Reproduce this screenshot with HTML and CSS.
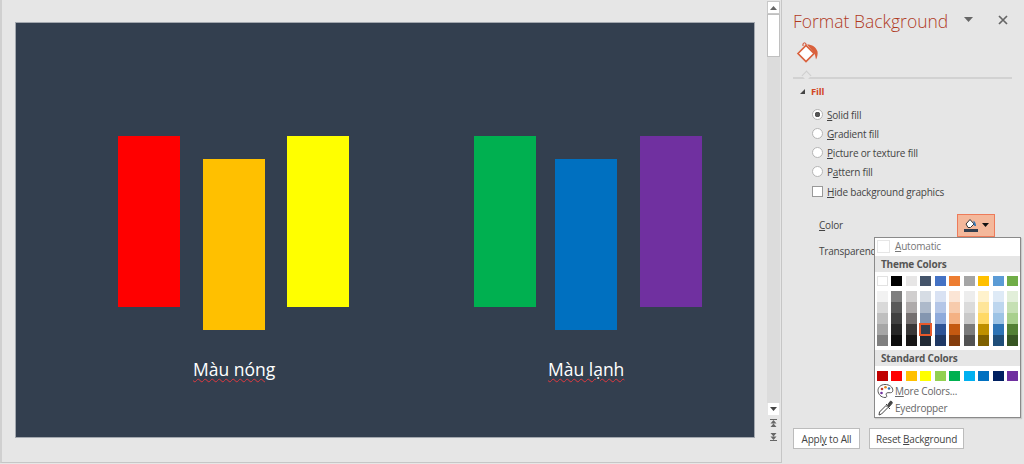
FILE: index.html
```html
<!DOCTYPE html>
<html lang="vi">
<head>
<meta charset="utf-8">
<title>Format Background</title>
<link rel="stylesheet" href="styles.css">
</head>
<body>
<div class="app">
  <main class="editor">
    <div class="canvas">
      <section class="slide">
        <div class="bar red"></div>
        <div class="bar orange"></div>
        <div class="bar yellow"></div>
        <div class="bar green"></div>
        <div class="bar blue"></div>
        <div class="bar purple"></div>
        <p class="caption hot">Màu nóng</p>
        <p class="caption cold">Màu lạnh</p>
      </section>
    </div>
    <div class="scrollbar">
      <div class="sb-btn top"><svg width="7" height="4" viewBox="0 0 7 4"><path d="M3.500 0 7 4H0z" fill="#666"/></svg></div>
      <div class="sb-thumb"></div>
      <div class="sb-track"></div>
      <div class="sb-btn down"><svg width="7" height="4" viewBox="0 0 7 4"><path d="M0 0H7L3.500 4z" fill="#444"/></svg></div>
      <div class="sb-page"><svg width="7" height="8" viewBox="0 0 7 8"><path d="M0 0h7v1H0zM3.500 1 6.500 4.500H.5zM3.500 4.500 6.500 8H.5z" fill="#666"/></svg></div>
      <div class="sb-page"><svg width="7" height="8" viewBox="0 0 7 8"><path d="M.5 0H6.500L3.500 3.500zM.5 3.500H6.500L3.500 7zM0 7h7v1H0z" fill="#666"/></svg></div>
    </div>
  </main>

  <aside class="pane">
    <header class="pane-head">
      <h1 class="pane-title">Format Background</h1>
      <svg class="pane-menu" width="9" height="5" viewBox="0 0 9 5"><path d="M0 0H9L4.500 5z" fill="#666"/></svg>
      <svg class="pane-close" width="10" height="10" viewBox="0 0 10 10"><path d="M1 1 9 9M9 1 1 9" stroke="#666" stroke-width="1.700"/></svg>
    </header>
    <div class="tabs">
      <svg width="23" height="22" viewBox="0 0 23 22"><path d="M7 4V2C7 .5 10 .5 10 2V6" fill="none" stroke="#d24726" stroke-width="1"/><path d="M2 11.500 10 3.500l8 8-8 8z" fill="#fff" stroke="#d9603c" stroke-width="1.700"/><path d="M11 2.500c5 0 9 2.500 10.500 7 .5 2-.2 6-1.500 8-.5-2-.5-3.500-1.500-6z" fill="#d9603c"/></svg>
    </div>
    <div class="tab-rule"><span class="notch"></span></div>
    <div class="section-head"><span class="tri"></span><strong>Fill</strong></div>
    <ul class="options">
      <li><span class="radio on"></span><span><u>S</u>olid fill</span></li>
      <li><span class="radio"></span><span><u>G</u>radient fill</span></li>
      <li><span class="radio"></span><span><u>P</u>icture or texture fill</span></li>
      <li><span class="radio"></span><span>P<u>a</u>ttern fill</span></li>
      <li class="check-row"><span class="check"></span><span><u>H</u>ide background graphics</span></li>
    </ul>
    <div class="color-row">
      <span><u>C</u>olor</span>
      <button class="color-btn" type="button">
        <svg width="14" height="14" viewBox="0 0 14 14"><path d="M2 6 6 1.500 10 6 6.500 9.500H4z" fill="#fff" stroke="#333" stroke-width="1"/><path d="M9.500 2.500c1.500 1 2.500 3 2.500 5.500h-1.500L9.500 6z" fill="#2e75b6"/><path d="M0 11h14v3H0z" fill="#333f4f"/></svg>
        <svg width="7" height="4" viewBox="0 0 7 4"><path d="M0 0H7L3.500 4z" fill="#111"/></svg>
      </button>
    </div>
    <div class="trans-row">Transparency</div>
    <footer class="pane-foot">
      <button class="btn apply" type="button">Appl<u>y</u> to All</button>
      <button class="btn reset" type="button">Reset <u>B</u>ackground</button>
    </footer>
  </aside>

  <div class="menu">
    <div class="menu-auto"><span class="auto-chip"></span><span><u>A</u>utomatic</span></div>
    <div class="menu-head">Theme Colors</div>
    <div class="row base" id="base"></div>
    <div class="tints" id="tints"></div>
    <div class="menu-head">Standard Colors</div>
    <div class="row standard" id="standard"></div>
    <div class="menu-item more">
      <svg width="17" height="16" viewBox="0 0 17 16"><path d="M8 1.500C3.500 1.500 1 4.500 1 7.500 1 11 4 14.500 8 14.500c2 0 2-1.500 1.300-2.500-.7-1.200.2-2.300 1.700-2.300h2.500c1.500 0 2.300-1 2.300-2.400C15.800 4 12.500 1.500 8 1.500z" fill="#fff" stroke="#555" stroke-width="1"/><circle cx="5" cy="6" r="1.300" fill="#c0392b"/><circle cx="8.500" cy="4.300" r="1.300" fill="#e08a1e"/><circle cx="12" cy="5.500" r="1.300" fill="#2e75b6"/><circle cx="4.500" cy="10" r="1.300" fill="#7030a0"/></svg>
      <span><u>M</u>ore Colors...</span>
    </div>
    <div class="menu-item">
      <svg width="17" height="16" viewBox="0 0 17 16"><path d="M2 15 2.500 12 9 5.500 11 7.500 4.500 14z" fill="#fff" stroke="#444" stroke-width="1"/><path d="M9 4 10.500 5.500 13 1.500C14 .500 16 2 15 3.500L11.500 7.500 13 9" fill="#444" stroke="#444" stroke-width="1"/></svg>
      <span>Eyedropper</span>
    </div>
  </div>
</div>
<script src="app.js"></script>
</body>
</html>
```
FILE: app.js
```js
var base = ["#ffffff","#000000","#e7e6e6","#44546a","#4472c4","#ed7d31","#a5a5a5","#ffc000","#5b9bd5","#70ad47"];
var tints = [
  ["#f2f2f2","#d9d9d9","#bfbfbf","#a6a6a6","#808080"],
  ["#7f7f7f","#595959","#404040","#262626","#0d0d0d"],
  ["#d0cece","#aeaaaa","#757070","#3a3838","#171616"],
  ["#d6dce4","#adb9ca","#8496b0","#333f4f","#222a35"],
  ["#d9e2f3","#b4c6e7","#8eaadb","#2f5496","#1f3864"],
  ["#fbe5d5","#f7cbac","#f4b183","#c45911","#843c0c"],
  ["#ededed","#dbdbdb","#c9c9c9","#7b7b7b","#525252"],
  ["#fff2cc","#fee599","#ffd965","#bf9000","#7f6000"],
  ["#deeaf6","#bdd6ee","#9cc3e5","#2e74b5","#1f4e79"],
  ["#e2efd9","#c5e0b3","#a8d08d","#538135","#375623"]
];
var standard = ["#c00000","#ff0000","#ffc000","#ffff00","#92d050","#00b050","#00b0f0","#0070c0","#002060","#7030a0"];

function swatch(color, cls) {
  var el = document.createElement("span");
  el.className = cls;
  el.style.background = color;
  return el;
}
function fillRow(id, colors) {
  var row = document.getElementById(id);
  colors.forEach(function (c) { row.appendChild(swatch(c, "swatch")); });
}
fillRow("base", base);
fillRow("standard", standard);
var host = document.getElementById("tints");
tints.forEach(function (col, i) {
  var wrap = document.createElement("div");
  wrap.className = "tint-col";
  col.forEach(function (c, j) {
    wrap.appendChild(swatch(c, i === 3 && j === 3 ? "cell picked" : "cell"));
  });
  host.appendChild(wrap);
});
```
FILE: styles.css
```css
* { box-sizing: border-box; }
html, body { margin: 0; padding: 0; }
body {
  width: 1024px;
  height: 464px;
  overflow: hidden;
  background: #e6e6e6;
  font-family: "Open Sans", "Noto Sans", sans-serif;
  font-size: 10px;
  letter-spacing: -0.2px;
  color: #444;
}
u { text-underline-offset: 1px; }
.app { position: relative; display: flex; width: 1024px; height: 464px; }

.editor {
  display: flex;
  width: 782px;
  height: 463px;
  border-left: 2px solid #d0d0d0;
  border-right: 1px solid #c6c6c6;
  border-bottom: 1px solid #c6c6c6;
}
.canvas { width: 765px; padding: 22px 0 0 13px; }
.slide {
  position: relative;
  width: 740px;
  height: 416px;
  background: #333f4f;
  border: 1px solid #a3a8af;
}
.bar { position: absolute; width: 62px; height: 171px; }
.red { left: 102px; top: 113px; background: #ff0000; }
.orange { left: 187px; top: 136px; background: #ffc000; }
.yellow { left: 271px; top: 113px; background: #ffff00; }
.green { left: 458px; top: 113px; background: #00b050; }
.blue { left: 539px; top: 136px; background: #0070c0; }
.purple { left: 624px; top: 113px; background: #7030a0; }
.caption {
  position: absolute;
  top: 334px;
  margin: 0;
  color: #fff;
  font-size: 17.500px;
  letter-spacing: 0;
  line-height: 24px;
  text-decoration: underline wavy #e0383e 1px;
  text-underline-offset: 2px;
}
.hot { left: 177px; }
.cold { left: 532px; }

.scrollbar {
  display: flex;
  flex-direction: column;
  align-items: flex-start;
  width: 14px;
  padding-top: 1px;
  background: #e6e6e6;
}
.sb-btn {
  display: flex;
  align-items: center;
  justify-content: center;
  width: 13px;
  height: 13px;
  background: #fff;
  border: 1px solid #c8c8c8;
}
.sb-thumb { width: 13px; height: 43px; background: #fff; border: 1px solid #c0c0c0; }
.sb-track { width: 13px; height: 346px; background: #dcdcdc; }
.sb-btn.down { height: 12px; margin-left: 1px; width: 11px; border-color: #fff; }
.sb-page { display: flex; justify-content: center; width: 13px; height: 14px; padding-top: 4px; }

.pane { flex: 1; padding-left: 11px; position: relative; }
.pane-head { display: flex; align-items: center; height: 42px; }
.pane-title {
  margin: 0;
  width: 171px;
  color: #b03a1e;
  font-size: 17.500px;
  font-weight: 300;
  letter-spacing: 0;
  line-height: 23px;
  white-space: nowrap;
}
.pane-menu { margin-top: -3px; }
.pane-close { margin: -2px 0 0 25px; }
.tabs { height: 35px; padding-left: 3px; }
.tabs svg { display: block; }
.tab-rule { position: relative; width: 219px; height: 2px; background: #d2d2d2; }
.notch {
  position: absolute;
  left: 10px;
  top: -5px;
  width: 7px;
  height: 7px;
  background: #e6e6e6;
  border-left: 1px solid #cfcfcf;
  border-top: 1px solid #cfcfcf;
  transform: rotate(45deg);
}
.section-head { display: flex; align-items: center; height: 24px; padding-left: 7px; color: #d24726; }
.section-head strong { font-size: 9.500px; font-weight: 700; margin-left: 6px; }
.tri {
  width: 0;
  height: 0;
  border-left: 5px solid transparent;
  border-bottom: 5px solid #444;
}
.options { list-style: none; margin: 2px 0 0; padding: 0 0 0 19px; }
.options li { display: flex; align-items: center; height: 19px; gap: 4px; }
.radio { width: 11px; height: 11px; border-radius: 50%; background: #fff; border: 1px solid #b5b5b5; }
.radio.on { background: radial-gradient(circle, #555 0 2.500px, #fff 3px); }
.check { width: 11px; height: 11px; background: #fff; border: 1px solid #999; }
.options .check-row { height: 21px; }
.color-row {
  display: flex;
  align-items: center;
  justify-content: space-between;
  width: 176px;
  height: 24px;
  margin: 11px 0 0 26px;
}
.color-btn {
  display: flex;
  align-items: center;
  justify-content: center;
  gap: 4px;
  width: 38px;
  height: 23px;
  padding: 0;
  background: #f4b89b;
  border: 1px solid #ed7b5a;
}
.trans-row { margin: 6px 0 0 26px; line-height: 16px; }
.pane-foot { position: absolute; left: 11px; top: 428px; display: flex; gap: 9px; }
.btn {
  height: 21px;
  padding: 0;
  background: #fff;
  border: 1px solid #bcbcbc;
  font: inherit;
  letter-spacing: inherit;
  color: #444;
}
.apply { width: 67px; }
.reset { width: 95px; }

.menu {
  position: absolute;
  left: 874px;
  top: 237px;
  width: 147px;
  height: 181px;
  background: #fff;
  border: 1px solid #8a8a8a;
  box-shadow: 1px 1px 1px rgba(0, 0, 0, .12);
}
.menu-auto { display: flex; align-items: center; height: 18px; gap: 5px; padding: 0 0 2px 2px; color: #777; }
.auto-chip { width: 13px; height: 13px; background: #fff; border: 1px solid #e6e6e6; }
.menu-head {
  height: 16px;
  padding-left: 6px;
  background: #e6e6e6;
  font-weight: 700;
  line-height: 16px;
  color: #555;
}
.row { display: flex; justify-content: space-between; padding: 4px 2px 0; }
.base { height: 15px; }
.standard { height: 15px; padding-top: 5px; }
.swatch { width: 11px; height: 10px; }
.base .swatch:first-child { outline: 1px solid #e2e2e2; outline-offset: -1px; }
.tints { display: flex; justify-content: space-between; height: 63px; padding: 4px 2px 0; }
.tint-col { display: flex; flex-direction: column; width: 11px; }
.cell { width: 11px; height: 11px; }
.picked { position: relative; outline: 2px solid #e8592a; outline-offset: -1px; }
.menu-item { display: flex; align-items: center; gap: 1px; height: 17px; padding: 0 0 1px 2px; color: #666; }
.more { margin-top: 2px; height: 17px; }
```
